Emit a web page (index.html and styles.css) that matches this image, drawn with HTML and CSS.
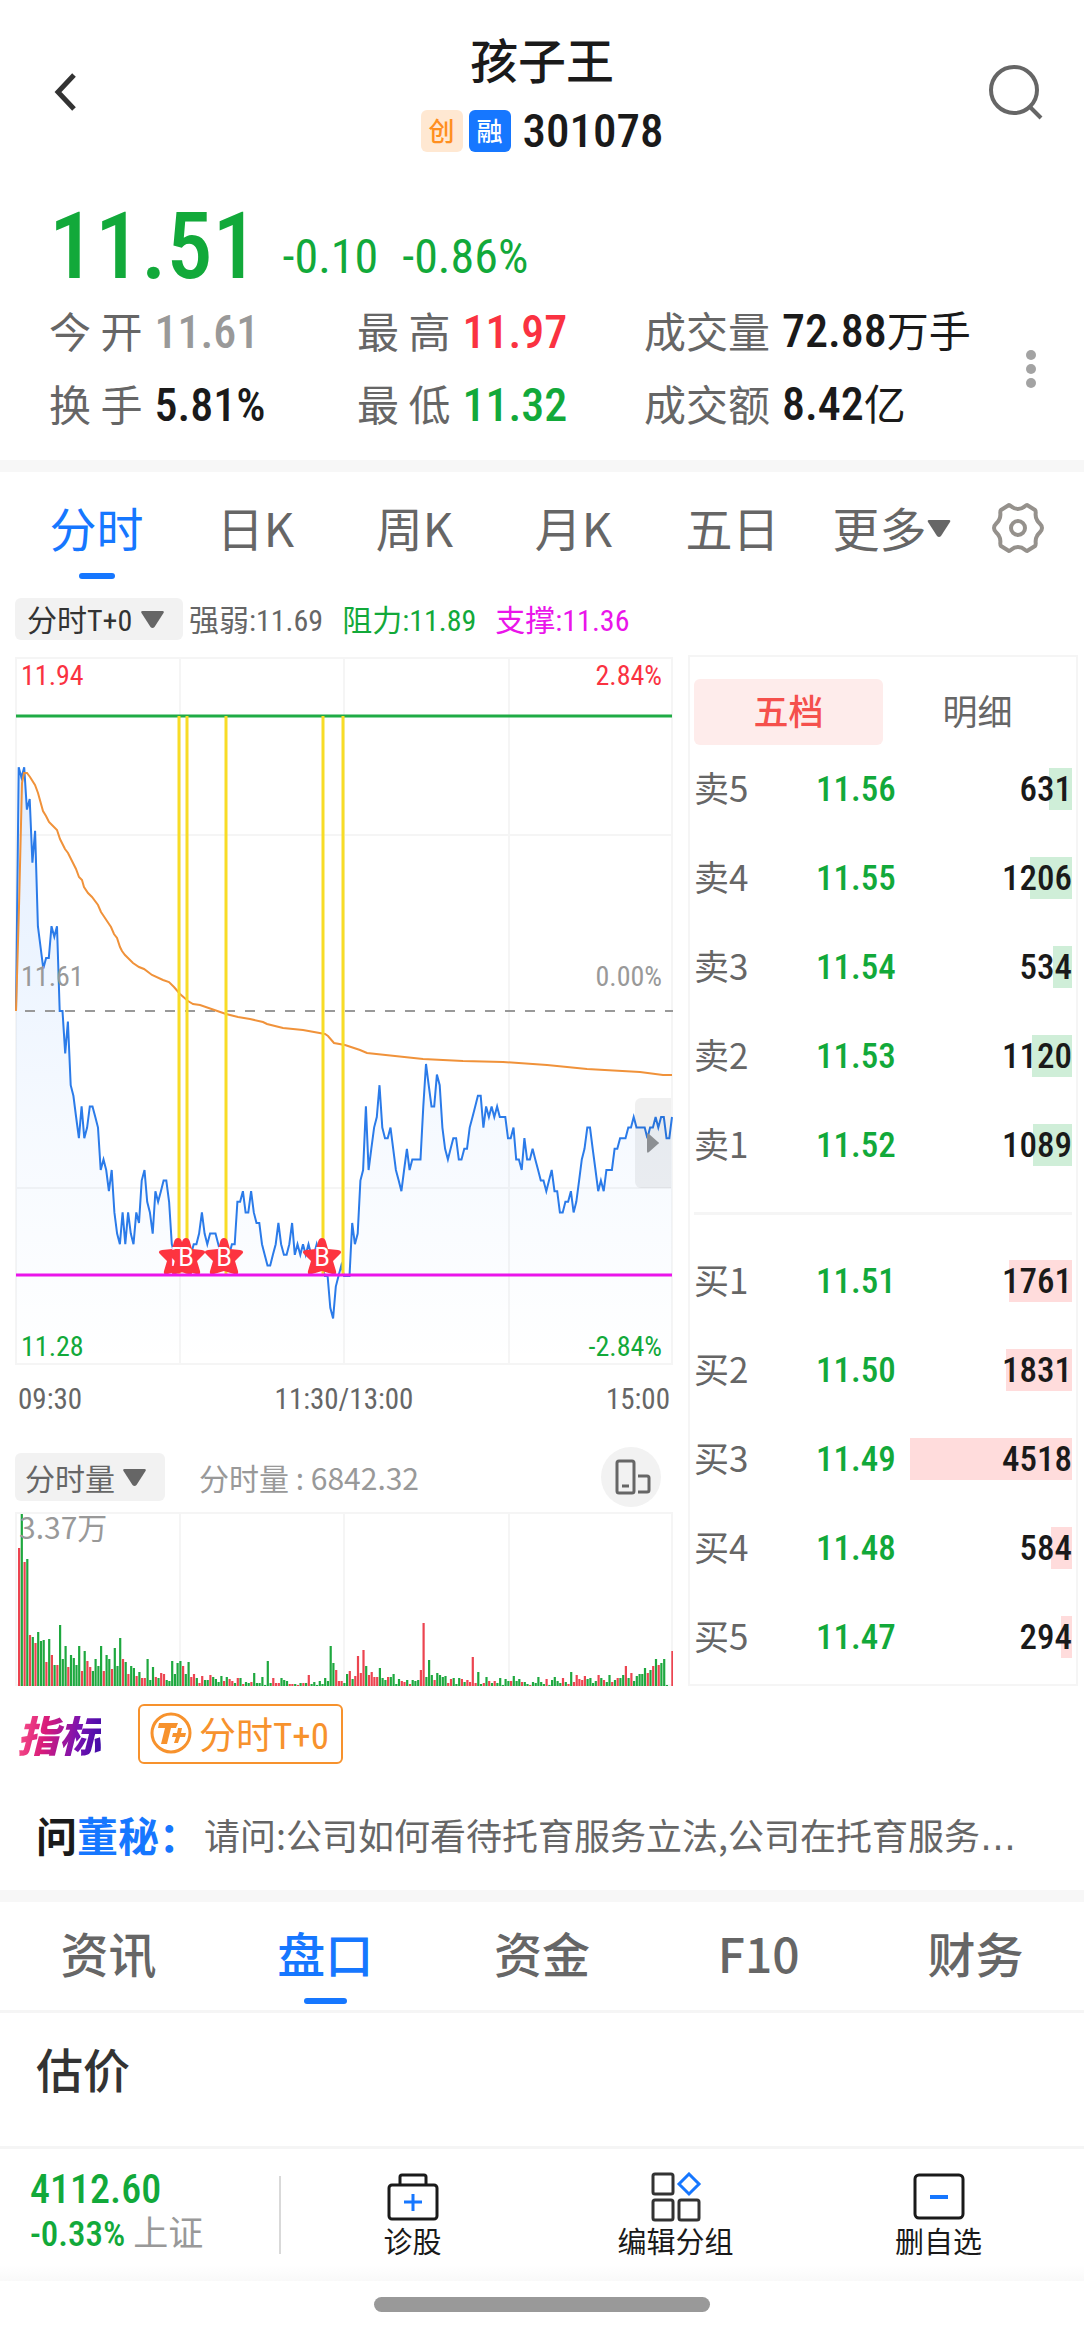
FILE: index.html
```html
<!DOCTYPE html>
<html lang="zh-CN">
  <head>
    <meta charset="UTF-8" />
    <meta name="viewport" content="width=device-width, initial-scale=1.0" />
    <title>孩子王 301078</title>
    <link rel="stylesheet" href="styles.css">
  </head>
  <body>
    <header class="topbar">
      <button class="icon-btn back" aria-label="返回">
        <svg width="24" height="38" viewBox="0 0 24 38"><path d="M21 2 5 19l16 17" fill="none" stroke="#333" stroke-width="5"/></svg>
      </button>
      <div class="title">
        <h1>孩子王</h1>
        <div class="code">
          <span class="badge badge-gem">创</span>
          <span class="badge badge-margin">融</span>
          <span class="num">301078</span>
        </div>
      </div>
      <button class="icon-btn" aria-label="搜索">
        <svg width="56" height="58" viewBox="0 0 56 58" fill="none" stroke="#666" stroke-width="4"><circle cx="26" cy="27" r="23"/><path d="m42 44 11 11"/></svg>
      </button>
    </header>

    <section class="quote">
      <div class="price num down">
        <strong>11.51</strong>
        <span>-0.10</span>
        <span>-0.86%</span>
      </div>
      <div class="stats">
        <div class="stat"><span>今 开</span><b class="num flat">11.61</b></div>
        <div class="stat"><span>最 高</span><b class="num up">11.97</b></div>
        <div class="stat"><span>成交量</span><b class="num">72.88<i>万手</i></b></div>
        <div class="stat"><span>换 手</span><b class="num">5.81%</b></div>
        <div class="stat"><span>最 低</span><b class="num down">11.32</b></div>
        <div class="stat"><span>成交额</span><b class="num">8.42<i>亿</i></b></div>
        <button class="more" aria-label="更多行情">
          <svg width="10" height="38" viewBox="0 0 10 38" fill="#a3a3a3"><circle cx="5" cy="5" r="5"/><circle cx="5" cy="19" r="5"/><circle cx="5" cy="33" r="5"/></svg>
        </button>
      </div>
    </section>

    <nav class="period-tabs">
      <button class="active">分时</button>
      <button>日K</button>
      <button>周K</button>
      <button>月K</button>
      <button>五日</button>
      <button>更多<svg width="24" height="17" viewBox="0 0 24 17" fill="#666"><path d="M2 0h20q2 0 1 2L14 16q-2 2-4 0L1 2Q0 0 2 0z"/></svg></button>
      <button class="gear" aria-label="设置">
        <svg width="52" height="52" viewBox="0 0 52 52" fill="none" stroke="#95918c" stroke-width="4" stroke-linejoin="round"><path d="M17 3c2 0 3 4 9 4s7-4 9-4l8 5c2 2-1 5 2 10 2 4 5 4 5 8 0 4-3 4-5 8-3 5 0 8-2 10l-8 5c-2 0-3-4-9-4s-7 4-9 4l-8-5c-2-2 1-5-2-10-2-4-5-4-5-8 0-4 3-4 5-8 3-5 0-8 2-10z"/><circle cx="26" cy="26" r="7"/></svg>
      </button>
    </nav>

    <div class="toolrow num">
      <div class="picker">
        <select aria-label="主图指标"><option>分时T+0</option></select>
        <svg width="25" height="17" viewBox="0 0 24 17" fill="#666"><path d="M2 0h20q2 0 1 2L14 16q-2 2-4 0L1 2Q0 0 2 0z"/></svg>
      </div>
      <span>强弱:11.69</span>
      <span class="down">阻力:11.89</span>
      <span class="support">支撑:11.36</span>
    </div>

    <main class="board">
      <div class="charts">
        <div class="chart num">
          <svg id="priceChart" viewBox="0 0 658 708">
            <defs>
              <linearGradient id="areaFill" gradientUnits="userSpaceOnUse" x1="0" y1="110" x2="0" y2="708">
                <stop offset="0" stop-color="#1677ff" stop-opacity="0.12"/>
                <stop offset="0.6" stop-color="#1677ff" stop-opacity="0.04"/>
                <stop offset="1" stop-color="#1677ff" stop-opacity="0"/>
              </linearGradient>
            </defs>
            <g class="grid">
              <path d="M1 1h656v706H1z"/>
              <path d="M165 1v706M329 1v706M494 1v706M1 178h656M1 531h656"/>
            </g>
            <polygon id="area" fill="url(#areaFill)"/>
            <path d="M10 354h648" stroke="#999" stroke-width="2" stroke-dasharray="10 10"/>
            <polyline id="priceLine" fill="none" stroke="#2b7be9" stroke-width="2"/>
            <polyline id="avgLine" fill="none" stroke="#f0923a" stroke-width="2"/>
            <path d="M1 59h656" stroke="#1fab45" stroke-width="3"/>
            <path d="M164 59v559M172 59v559M211 59v559M308 59v559M328 59v559" stroke="#f8dc26" stroke-width="3"/>
            <g id="signals"></g>
            <path d="M1 618h656" stroke="#ea15ea" stroke-width="3"/>
          </svg>
          <span class="tag top left up">11.94</span>
          <span class="tag top right up">2.84%</span>
          <span class="tag middle left">11.61</span>
          <span class="tag middle right">0.00%</span>
          <span class="tag bottom left down">11.28</span>
          <span class="tag bottom right down">-2.84%</span>
          <button class="drawer" aria-label="收起盘口">
            <svg width="12" height="20" viewBox="0 0 12 20" fill="#8c8f93"><path d="M0 2q0-3 2-1l9 8q2 1 0 2l-9 8q-2 2-2-1z"/></svg>
          </button>
        </div>
        <div class="times num"><span>09:30</span><span>11:30/13:00</span><span>15:00</span></div>

        <div class="volume-head">
          <div class="picker">
            <select aria-label="副图指标"><option>分时量</option></select>
            <svg width="25" height="17" viewBox="0 0 24 17" fill="#666"><path d="M2 0h20q2 0 1 2L14 16q-2 2-4 0L1 2Q0 0 2 0z"/></svg>
          </div>
          <span class="volume-value">分时量 : 6842.32</span>
          <button class="rotate" aria-label="横屏">
            <svg width="36" height="36" viewBox="0 0 36 36" fill="none" stroke="#666" stroke-width="3"><rect x="2" y="2" width="17" height="32" rx="2"/><path d="M7 27h7M23 17h9q2 0 2 2v12q0 2-2 2h-9"/></svg>
          </button>
        </div>
        <div class="chart">
          <svg id="volumeChart" viewBox="0 0 658 174">
            <g class="grid"><path d="M1 174V1h656v173M165 1v173M329 1v173M494 1v173M1 173h656"/></g>
            <g id="bars"></g>
          </svg>
          <span class="tag volume-max">3.37万</span>
        </div>
      </div>

      <aside class="depth">
        <div class="depth-tabs">
          <button class="active">五档</button>
          <button>明细</button>
        </div>
        <table class="asks">
          <tr><th>卖5</th><td>11.56</td><td><i class="bar" style="width: 14%"></i><b>631</b></td></tr>
          <tr><th>卖4</th><td>11.55</td><td><i class="bar" style="width: 26%"></i><b>1206</b></td></tr>
          <tr><th>卖3</th><td>11.54</td><td><i class="bar" style="width: 12%"></i><b>534</b></td></tr>
          <tr><th>卖2</th><td>11.53</td><td><i class="bar" style="width: 25%"></i><b>1120</b></td></tr>
          <tr><th>卖1</th><td>11.52</td><td><i class="bar" style="width: 24%"></i><b>1089</b></td></tr>
        </table>
        <table class="bids">
          <tr><th>买1</th><td>11.51</td><td><i class="bar" style="width: 39%"></i><b>1761</b></td></tr>
          <tr><th>买2</th><td>11.50</td><td><i class="bar" style="width: 41%"></i><b>1831</b></td></tr>
          <tr><th>买3</th><td>11.49</td><td><i class="bar" style="width: 100%"></i><b>4518</b></td></tr>
          <tr><th>买4</th><td>11.48</td><td><i class="bar" style="width: 13%"></i><b>584</b></td></tr>
          <tr><th>买5</th><td>11.47</td><td><i class="bar" style="width: 7%"></i><b>294</b></td></tr>
        </table>
      </aside>
    </main>

    <div class="indicators">
      <strong>指标</strong>
      <button class="num">
        <svg width="42" height="42" viewBox="0 0 42 42"><circle cx="21" cy="21" r="19" fill="none" stroke="#f7922d" stroke-width="3"/><path d="M9 11h19l-2 5h-5l-4 16h-6l4-16H8zM28 16h4l-1 5h5l-1 4h-5l-2 6h-4l2-6h-4l1-4h4z" fill="#f7922d"/></svg>
        分时T+0
      </button>
    </div>

    <a class="ask" href="#">
      <strong>问<em>董秘：</em></strong>
      <span>请问:公司如何看待托育服务立法,公司在托育服务<i>…</i></span>
    </a>

    <nav class="info-tabs">
      <button>资讯</button>
      <button class="active">盘口</button>
      <button>资金</button>
      <button>F10</button>
      <button>财务</button>
    </nav>

    <section class="valuation">
      <h2>估价</h2>
    </section>

    <footer class="dock">
      <div class="index num">
        <b>4112.60</b>
        <span><b>-0.33%</b> 上证</span>
      </div>
      <button>
        <svg width="52" height="50" viewBox="0 0 52 50" fill="none" stroke="#1a1a1a" stroke-width="3"><rect x="2" y="13" width="48" height="34" rx="3"/><path d="M13 13V5q0-2 2-2h22q2 0 2 2v8"/><path d="M26 22v17M17 30h18" stroke="#1677ff"/></svg>
        诊股
      </button>
      <button>
        <svg width="52" height="50" viewBox="0 0 52 50" fill="none" stroke="#333" stroke-width="3"><rect x="3" y="2" width="20" height="20" rx="2"/><rect x="3" y="28" width="20" height="20" rx="2"/><rect x="29" y="28" width="20" height="20" rx="2"/><path d="m39 2 10 10-10 10-10-10z" stroke="#1677ff"/></svg>
        编辑分组
      </button>
      <button>
        <svg width="52" height="50" viewBox="0 0 52 50" fill="none" stroke="#1a1a1a" stroke-width="3"><rect x="2" y="3" width="48" height="43" rx="4"/><path d="M17 25h18" stroke="#1677ff" stroke-width="4"/></svg>
        删自选
      </button>
    </footer>
    <div class="home"><span></span></div>

    <script src="chart.js"></script>
  </body>
</html>
```
FILE: styles.css
```css
* {
  box-sizing: border-box;
}
body {
  margin: 0;
  background: #fff;
  color: #1a1a1a;
  font-family: "Noto Sans CJK SC", sans-serif;
}
button,
select {
  padding: 0;
  border: none;
  background: none;
  color: inherit;
  font: inherit;
  cursor: pointer;
}
svg {
  display: block;
}
b,
i {
  font-style: normal;
  font-weight: inherit;
}
.num,
button.num,
.depth td {
  font-family: "Roboto Condensed", Roboto, "Noto Sans CJK SC", sans-serif;
}
.up {
  color: #fa3241;
}
.down {
  color: #12a93a;
}
.flat {
  color: #999;
}
.support {
  color: #ea15ea;
}

/* Header */
.topbar {
  display: flex;
  justify-content: space-between;
  align-items: center;
  height: 184px;
  padding: 0 40px;
}
.icon-btn {
  width: 56px;
}
.back {
  padding-left: 13px;
}
.title {
  text-align: center;
}
h1 {
  margin: 0 0 20px;
  font-size: 48px;
  line-height: 58px;
  font-weight: 500;
}
.code {
  display: flex;
  align-items: center;
  gap: 6px;
  font-size: 47px;
  line-height: 48px;
  font-weight: 500;
}
.code .num {
  margin-left: 6px;
}
.badge {
  width: 42px;
  height: 42px;
  border-radius: 6px;
  font-size: 26px;
  line-height: 40px;
}
.badge-gem {
  background: #ffe8d2;
  color: #ff8f1f;
}
.badge-margin {
  background: #1677ff;
  color: #fff;
}

/* Quote */
.quote {
  padding: 14px 0 21px 49px;
  border-bottom: 12px solid #f7f7f7;
}
.price {
  display: flex;
  align-items: flex-end;
  gap: 24px;
  height: 96px;
  font-size: 48px;
  line-height: 74px;
}
.price strong {
  font-size: 92px;
  font-weight: 500;
  line-height: 94px;
}
.stats {
  position: relative;
  display: grid;
  grid-template-columns: 308fr 287fr 440fr;
  grid-auto-rows: 72px;
  row-gap: 1px;
}
.stat {
  display: flex;
  align-items: center;
  gap: 12px;
  font-size: 46px;
  line-height: 60px;
}
.stat span,
.stat i {
  font-size: 42px;
}
.stat span {
  color: #666;
}
.stat b {
  padding-top: 4px;
  font-weight: 500;
}
.stat i {
  font-weight: 400;
}
.more {
  position: absolute;
  right: 48px;
  top: 56px;
}

/* Period tabs */
.period-tabs {
  display: grid;
  grid-template-columns: repeat(6, 159fr) 94fr;
  padding: 0 19px 0 17px;
  height: 116px;
  font-size: 47px;
  color: #666;
}
.period-tabs button,
.info-tabs button {
  position: relative;
  display: flex;
  align-items: center;
  justify-content: center;
  padding-bottom: 8px;
}
.period-tabs svg {
  margin-top: 4px;
}
.active {
  color: #1677ff;
}
.period-tabs .active::after,
.info-tabs .active::after {
  content: "";
  position: absolute;
  bottom: 9px;
  width: 36px;
  height: 6px;
  border-radius: 3px;
  background: #1677ff;
}

/* Chart toolbar */
.toolrow {
  display: flex;
  align-items: center;
  gap: 19px;
  padding: 10px 15px 15px;
  font-size: 30px;
  line-height: 38px;
  color: #666;
}
.toolrow > span {
  padding-top: 4px;
}
.toolrow .picker {
  margin-right: -13px;
  height: 42px;
  color: #333;
}
.picker {
  position: relative;
  display: flex;
  align-items: center;
  border-radius: 6px;
  background: #f2f2f2;
}
.picker select {
  appearance: none;
  height: 100%;
  padding: 0 50px 0 12px;
}
.toolrow .picker select {
  padding-top: 4px;
}
.picker svg {
  position: absolute;
  right: 18px;
  pointer-events: none;
}

/* Board */
.board {
  display: grid;
  grid-template-columns: 658fr 390fr;
  gap: 15px;
  padding: 0 6px 0 15px;
}
.charts {
  padding-top: 2px;
}
.chart {
  position: relative;
}
.chart > svg {
  width: 100%;
}
.grid path {
  fill: none;
  stroke: #f5f5f5;
  stroke-width: 2;
}
.tag {
  position: absolute;
  font-size: 28px;
  line-height: 36px;
}
.tag:not(.up, .down) {
  color: #999;
}
.left {
  left: 6px;
}
.right {
  right: 11px;
}
.top {
  top: 1px;
}
.middle {
  bottom: 370px;
}
.bottom {
  bottom: 0;
}
.volume-max {
  left: 4px;
  top: -4px;
  font-size: 30px;
}
.drawer {
  position: absolute;
  right: 2px;
  top: 441px;
  width: 36px;
  height: 90px;
  padding-left: 12px;
  border-radius: 6px 0 0 6px;
  background: rgba(0, 0, 0, 0.06);
}
.times {
  display: flex;
  justify-content: space-between;
  padding: 16px 3px;
  font-size: 29px;
  line-height: 36px;
  color: #666;
}
.volume-head {
  display: flex;
  align-items: center;
  margin: 14px 0 5px;
  font-size: 30px;
  line-height: 44px;
  color: #999;
}
.volume-head .picker {
  height: 48px;
  color: #666;
}
.volume-head .picker select {
  padding-left: 10px;
}
.volume-value {
  margin: 0 auto 0 34px;
}
.rotate {
  width: 60px;
  height: 60px;
  margin-right: 12px;
  padding-left: 14px;
  border-radius: 50%;
  background: #f2f2f2;
}

/* Order book */
.depth {
  padding: 22px 4px 0;
  border: 2px solid #f5f5f5;
}
.depth-tabs {
  display: grid;
  grid-template-columns: 1fr 1fr;
  font-size: 35px;
  color: #666;
}
.depth-tabs button {
  height: 66px;
  padding-bottom: 5px;
}
.depth-tabs .active {
  border-radius: 6px;
  background: #feeceb;
  color: #f5504c;
  font-weight: 500;
}
.depth table {
  width: 100%;
  border-spacing: 0;
  table-layout: fixed;
}
.depth tr {
  height: 89px;
}
.depth th,
.depth td {
  position: relative;
  padding: 0;
  text-align: left;
}
.depth th {
  width: 122px;
  padding-bottom: 5px;
  font-size: 35px;
  font-weight: 400;
  line-height: 48px;
  color: #666;
}
.depth td {
  font-size: 35px;
  font-weight: 500;
  line-height: 48px;
  color: #12a93a;
}
.depth td:nth-child(2) {
  width: 94px;
}
.depth td:last-child {
  text-align: right;
  color: #1a1a1a;
}
.depth b {
  position: relative;
}
.bar {
  position: absolute;
  right: 0;
  top: 23px;
  height: 42px;
}
.asks {
  margin-bottom: 22px;
}
.bids {
  padding-top: 22px;
  border-top: 3px solid #f5f5f5;
}
.asks .bar {
  background: #cfeed8;
}
.bids .bar {
  background: #ffdcdc;
}

/* Indicators */
.indicators {
  display: flex;
  align-items: center;
  gap: 37px;
  padding: 18px 17px 0;
}
.indicators strong {
  background: linear-gradient(100deg, #ff5a8a, #d81b7a 35%, #7a12b0 70%, #3a0ca8);
  -webkit-background-clip: text;
  background-clip: text;
  color: transparent;
  font-size: 42px;
  font-style: italic;
  font-weight: 900;
  line-height: 60px;
}
.indicators button {
  display: flex;
  align-items: center;
  gap: 7px;
  height: 60px;
  padding: 0 12px 2px 10px;
  border: 2px solid #f7922d;
  border-radius: 6px;
  color: #f7922d;
  font-size: 37px;
}
.ask {
  display: flex;
  align-items: center;
  gap: 4px;
  padding: 40px 36px 26px;
  border-bottom: 12px solid #f7f7f7;
  color: #666;
  font-size: 36px;
  line-height: 60px;
  text-decoration: none;
  white-space: nowrap;
}
.ask strong {
  color: #1a1a1a;
  font-size: 41px;
}
.ask em {
  color: #1677ff;
  font-style: normal;
}
.ask i {
  font-family: "DejaVu Sans", sans-serif;
  line-height: 1;
}

/* Info tabs */
.info-tabs {
  display: grid;
  grid-template-columns: repeat(5, 1fr);
  height: 111px;
  border-bottom: 3px solid #f5f5f5;
  font-size: 48px;
  font-weight: 500;
  color: #666;
}
.info-tabs .active::after {
  bottom: 6px;
  width: 43px;
}
.valuation {
  height: 133px;
  padding: 20px 36px;
}
h2 {
  margin: 0;
  color: #333;
  font-size: 47px;
  font-weight: 500;
  line-height: 70px;
}

/* Bottom dock */
.dock {
  display: grid;
  grid-template-columns: 281fr repeat(3, 263fr) 14fr;
  align-items: center;
  height: 135px;
  border-top: 3px solid #f5f5f5;
  background: linear-gradient(#fff 88%, #f9f9f9);
}
.dock button {
  display: flex;
  flex-direction: column;
  align-items: center;
  font-size: 29px;
  line-height: 36px;
}
.index {
  display: flex;
  flex-direction: column;
  justify-content: center;
  height: 78px;
  padding: 0 0 6px 30px;
  border-right: 2px solid #d9d9d9;
  color: #999;
  font-size: 35px;
  line-height: 45px;
}
.index b {
  color: #12a93a;
  font-weight: 500;
}
.index > b {
  font-size: 40px;
}
.home {
  padding: 16px 0 18px;
}
.home span {
  display: block;
  width: 31%;
  height: 15px;
  margin: 0 auto;
  border-radius: 8px;
  background: #999;
}
```
FILE: chart.js
```js
// Price per minute, in cents above or below the previous close
const ticks = [
  0, 23, 22, 23, 19, 20, 14, 17, 8, 6, 4, 5, 5, 8, 7, 8, 0, 0, -4, -1,
  -7, -8, -10, -12, -9, -12, -11, -9, -9, -10, -11, -15, -14, -15, -17, -15, -19, -21, -22, -19,
  -22, -19, -21, -22, -19, -20, -16, -15, -18, -19, -21, -17, -18, -17, -16, -16, -18, -22, -23, -24,
  -24, -24, -23, -24, -23, -22, -22, -21, -19, -21, -22, -21, -21, -21, -22, -23, -24, -24, -23, -22,
  -22, -18, -18, -17, -19, -19, -17, -19, -20, -20, -22, -23, -24, -24, -23, -22, -20, -22, -23, -23,
  -22, -20, -23, -22, -23, -22, -23, -22, -23, -23, -22, -23, -24, -25, -25, -28, -29, -26, -25, -24,
  -25, -25, -25, -20, -22, -21, -16, -15, -9, -15, -13, -11, -10, -7, -11, -12, -12, -11, -13, -15,
  -16, -17, -15, -13, -15, -14, -14, -14, -14, -9, -5, -7, -9, -9, -6, -7, -11, -13, -14, -13,
  -12, -12, -14, -14, -13, -13, -11, -10, -9, -8, -8, -11, -9, -10, -9, -10, -9, -10, -10, -10,
  -12, -12, -11, -14, -14, -15, -12, -14, -14, -13, -14, -15, -16, -16, -17, -16, -15, -17, -17, -19,
  -19, -18, -18, -17, -19, -18, -16, -14, -13, -11, -11, -13, -15, -17, -16, -17, -15, -15, -15, -13,
  -13, -12, -12, -12, -11, -11, -10, -11, -11, -11, -11, -12, -11, -11, -10, -11, -10, -10, -12, -12, -10
];

// Average price line, [x, y]
const avg = [
  [1, 354], [4, 250], [7, 126], [9, 116], [12, 116], [15, 120], [20, 128], [23, 136], [28, 154], [31, 159],
  [34, 165], [37, 168], [42, 173], [45, 182], [50, 192], [53, 196], [61, 212], [64, 220], [67, 223], [69, 230],
  [73, 236], [77, 240], [83, 248], [86, 255], [88, 258], [94, 267], [96, 270], [99, 277], [102, 281], [105, 290],
  [107, 294], [110, 298], [118, 306], [124, 310], [129, 312], [137, 318], [148, 323], [154, 325], [159, 330], [165, 337],
  [173, 344], [178, 347], [185, 348], [211, 357], [223, 360], [235, 362], [248, 365], [252, 367], [268, 371], [288, 373],
  [310, 377], [313, 379], [319, 386], [330, 388], [345, 393], [352, 396], [408, 402], [448, 404], [488, 405], [532, 408],
  [572, 412], [625, 415], [648, 418], [657, 418]
];

// Volume per minute, r = up, g = down
const volume =
  "r138 g172 r124 g127 r51 g49 r43 g54 g45 g46 r24 g47 r31 g21 r21 g61 g27 g40 r19 g31 " +
  "g28 g21 g40 r15 g35 r25 r19 g15 g27 g20 g40 r15 g31 g27 r17 g38 g20 g48 r27 g24 " +
  "r12 g20 g18 r10 g14 r8 r8 g27 g6 g19 r9 g8 r13 r12 g6 g5 g25 g12 g23 g25 " +
  "r20 g12 g24 r9 r12 g8 r3 r10 g6 g6 r11 g9 g7 g4 g10 r5 g9 r7 r5 g3 " +
  "r8 g8 r2 g4 g3 r4 g13 g3 g3 g9 g1 g25 g3 r8 r3 r3 g8 g6 g5 r2 " +
  "r2 g2 r1 g3 r3 g3 r11 g2 g4 g1 g5 g2 g8 g5 g40 g23 r16 r5 r5 g3 " +
  "g12 r15 g7 r10 r30 r13 r36 g20 r11 r14 r9 r9 g18 g8 g6 r9 g9 g12 g2 g7 " +
  "r5 r4 g6 r2 g6 g5 g6 r16 r63 g9 g26 g11 r6 g13 g11 g9 g10 r3 r7 g8 " +
  "g2 g8 r7 g4 r6 r4 r29 r3 g14 g2 r3 g9 r5 g3 r5 g3 g8 g1 g7 g5 " +
  "r5 g10 g5 g7 r4 g4 g2 r1 g4 g3 g9 g4 g2 r7 g1 g6 g9 g5 g3 r8 " +
  "g4 r2 g14 r4 r11 r7 r6 r10 g7 g8 g3 g5 r11 g8 r6 g4 g11 r4 g6 r8 " +
  "g8 g11 r20 g8 r13 g5 g10 g12 g12 g18 r13 g16 r20 g27 r21 g23 g27 g1 g0 r35";

const left = 1;
const step = 656 / 240;
const points = ticks.map((t, i) => `${(left + i * step).toFixed(1)},${(354 - t * 10.6).toFixed(1)}`);

document.getElementById("priceLine").setAttribute("points", points.join(" "));
document.getElementById("area").setAttribute("points", `1,707 ${points.join(" ")} 657,707`);
document.getElementById("avgLine").setAttribute("points", avg.join(" "));

// Buy signals
document.getElementById("signals").innerHTML = [163, 171, 209, 307]
  .map(
    (x) => `<g transform="translate(${x} 600)">
      <path d="M0-19q3 0 4 4l2 7 10 1q5 1 2 4l-7 7 3 10q1 5-4 3l-10-3-10 3q-5 2-4-3l3-10-7-7q-3-3 2-4l10-1 2-7q1-4 4-4z" fill="#fd3440"/>
      <text y="9" text-anchor="middle" fill="#fff" font-family="Roboto" font-size="25">B</text>
    </g>`
  )
  .join("");

document.getElementById("bars").innerHTML = volume
  .split(" ")
  .map((v, i) => {
    const h = Number(v.slice(1));
    const color = v[0] === "r" ? "#ec4450" : "#1ea83f";
    return `<rect x="${(3 + i * step).toFixed(1)}" y="${174 - h}" width="2.2" height="${h}" fill="${color}"/>`;
  })
  .join("");
```
